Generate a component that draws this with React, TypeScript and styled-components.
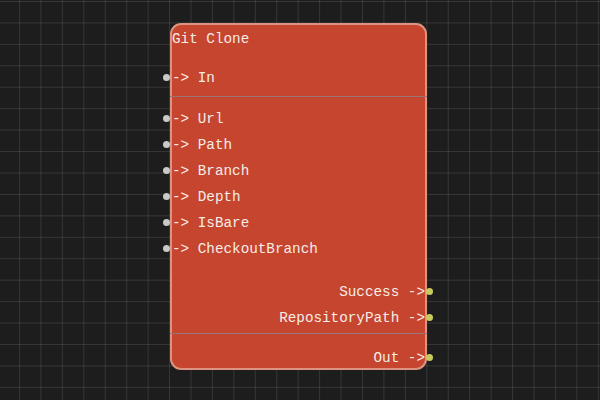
import React from "react";
import styled, { createGlobalStyle } from "styled-components";

const GlobalStyle = createGlobalStyle`
  html, body { margin: 0; padding: 0; background: #1d1d1d; }
  #root { width: 600px; height: 400px; }
`;

const Canvas = styled.div`
  position: relative;
  width: 600px;
  height: 400px;
  overflow: hidden;
  background-color: #1d1d1d;
  background-image:
    linear-gradient(to right, rgba(255,255,255,0.11) 1px, transparent 1px),
    linear-gradient(to bottom, rgba(255,255,255,0.11) 1px, transparent 1px);
  background-size: 21.45px 21.45px;
  background-position: 19px 1px;
  font-family: "Liberation Mono", "DejaVu Sans Mono", monospace;
  font-size: 14.3px;
  color: #f6ece8;
`;

const Node = styled.div`
  position: absolute;
  left: 170px;
  top: 23px;
  width: 257px;
  height: 347px;
  box-sizing: border-box;
  border: 2px solid #dc9482;
  border-radius: 11px;
  background: rgb(197, 69, 46);
  display: flex;
  flex-direction: column;
`;

const Title = styled.div`
  flex-shrink: 0;
  height: 26px;
  line-height: 28px;
  white-space: pre;
`;

const Section = styled.div<{ $top: number; $bottom?: number }>`
  flex-shrink: 0;
  display: flex;
  flex-direction: column;
  margin-top: ${(p) => p.$top}px;
  margin-bottom: ${(p) => p.$bottom ?? 0}px;
`;

const Separator = styled.div`
  flex-shrink: 0;
  height: 1px;
  margin: 0 -2px;
  background: #9a7478;
`;

const Row = styled.div<{ $out?: boolean }>`
  position: relative;
  flex-shrink: 0;
  height: 26px;
  line-height: 28px;
  white-space: pre;
  text-align: ${(p) => (p.$out ? "right" : "left")};
`;

const Pin = styled.span<{ $out?: boolean }>`
  position: absolute;
  top: 10px;
  width: 7px;
  height: 7px;
  border-radius: 50%;
  background: ${(p) => (p.$out ? "#c9ca5e" : "#c9c9c9")};
  ${(p) => (p.$out ? "right: -8px;" : "left: -9px;")}
`;

const inputs = ["Url", "Path", "Branch", "Depth", "IsBare", "CheckoutBranch"];
const outputs = ["Success", "RepositoryPath"];

export default function App() {
  return (
    <>
      <GlobalStyle />
      <Canvas>
        <Node>
          <Title>Git Clone</Title>
          <Section $top={13} $bottom={6}>
            <Row>
              <Pin />
              {"-> In"}
            </Row>
          </Section>
          <Separator />
          <Section $top={8}>
            {inputs.map((n) => (
              <Row key={n}>
                <Pin />
                {"-> " + n}
              </Row>
            ))}
          </Section>
          <Section $top={17} $bottom={3}>
            {outputs.map((n) => (
              <Row key={n} $out>
                {n + " ->"}
                <Pin $out />
              </Row>
            ))}
          </Section>
          <Separator />
          <Section $top={10}>
            <Row $out>
              {"Out ->"}
              <Pin $out />
            </Row>
          </Section>
        </Node>
      </Canvas>
    </>
  );
}
